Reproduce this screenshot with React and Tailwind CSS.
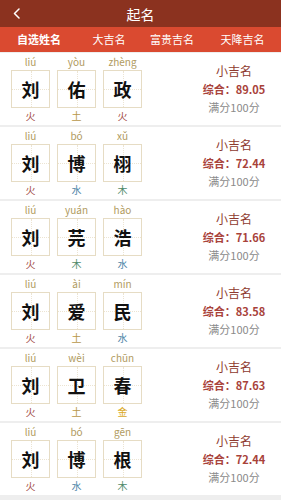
import React from "react";

const EL = {
  火: "text-[#a5504a]",
  土: "text-[#b8974a]",
  水: "text-[#4f86a8]",
  木: "text-[#4f8a6a]",
  金: "text-[#d9a81e]",
};

const rows = [
  { chars: [["liú", "刘", "火"], ["yòu", "佑", "土"], ["zhèng", "政", "火"]], score: "89.05" },
  { chars: [["liú", "刘", "火"], ["bó", "博", "水"], ["xǔ", "栩", "木"]], score: "72.44" },
  { chars: [["liú", "刘", "火"], ["yuán", "芫", "木"], ["hào", "浩", "水"]], score: "71.66" },
  { chars: [["liú", "刘", "火"], ["ài", "爱", "土"], ["mín", "民", "水"]], score: "83.58" },
  { chars: [["liú", "刘", "火"], ["wèi", "卫", "土"], ["chūn", "春", "金"]], score: "87.63" },
  { chars: [["liú", "刘", "火"], ["bó", "博", "水"], ["gēn", "根", "木"]], score: "72.44" },
];

function CharCell({ py, ch, el }) {
  return (
    <div className="flex flex-col items-center w-[39px]">
      <div className="h-[17px] leading-[17px] text-[10px] text-[#b09a5e]">{py}</div>
      <div className="relative w-[39px] h-[38px] border border-[#e6dcc4] bg-white flex items-center justify-center">
        <div className="absolute left-0 right-0 top-1/2 border-t border-dotted border-[#ece4d2]" />
        <div className="absolute top-0 bottom-0 left-1/2 border-l border-dotted border-[#ece4d2]" />
        <span className="relative text-[18px] font-bold text-[#111]">{ch}</span>
      </div>
      <div className={"h-[14px] leading-[14px] mt-[1px] text-[10px] " + EL[el]}>{el}</div>
    </div>
  );
}

export default function App() {
  return (
    <div
      className="w-[281px] h-[500px] overflow-hidden bg-[#eeeeee]"
      style={{ fontFamily: '"Noto Sans CJK SC", "Noto Sans", sans-serif' }}
    >
      <div className="relative h-[27px] bg-[#8b321f] flex items-center justify-center">
        <svg className="absolute left-[12px] top-[8px]" width="10" height="11" viewBox="0 0 10 11">
          <path d="M7 1 L2.5 5.5 L7 10" stroke="white" strokeWidth="1.5" fill="none" strokeLinecap="round" strokeLinejoin="round" />
        </svg>
        <span className="text-white text-[14px] leading-none">起名</span>
      </div>
      <div className="h-[25px] bg-[#da4a30] flex items-center text-white text-[11px]">
        <div className="w-[78px] text-center font-bold">自选姓名</div>
        <div className="w-[62px] text-center">大吉名</div>
        <div className="w-[64px] text-center">富贵吉名</div>
        <div className="w-[77px] text-center">天降吉名</div>
      </div>
      <div className="flex flex-col gap-[2px] pt-[1px]">
        {rows.map((r, i) => (
          <div key={i} className="h-[72px] bg-white flex">
            <div className="flex gap-[7px] pl-[11px]">
              {r.chars.map((c, j) => (
                <CharCell key={j} py={c[0]} ch={c[1]} el={c[2]} />
              ))}
            </div>
            <div className="flex-1 flex flex-col items-center pt-[9px] pl-[45px]">
              <div className="text-[12px] leading-[18px] text-[#8e3a2e]">小吉名</div>
              <div className="text-[11px] leading-[18px] text-[#a8423a] font-semibold">综合：{r.score}</div>
              <div className="text-[11px] leading-[18px] text-[#8a8a8a]">满分100分</div>
            </div>
          </div>
        ))}
      </div>
    </div>
  );
}
